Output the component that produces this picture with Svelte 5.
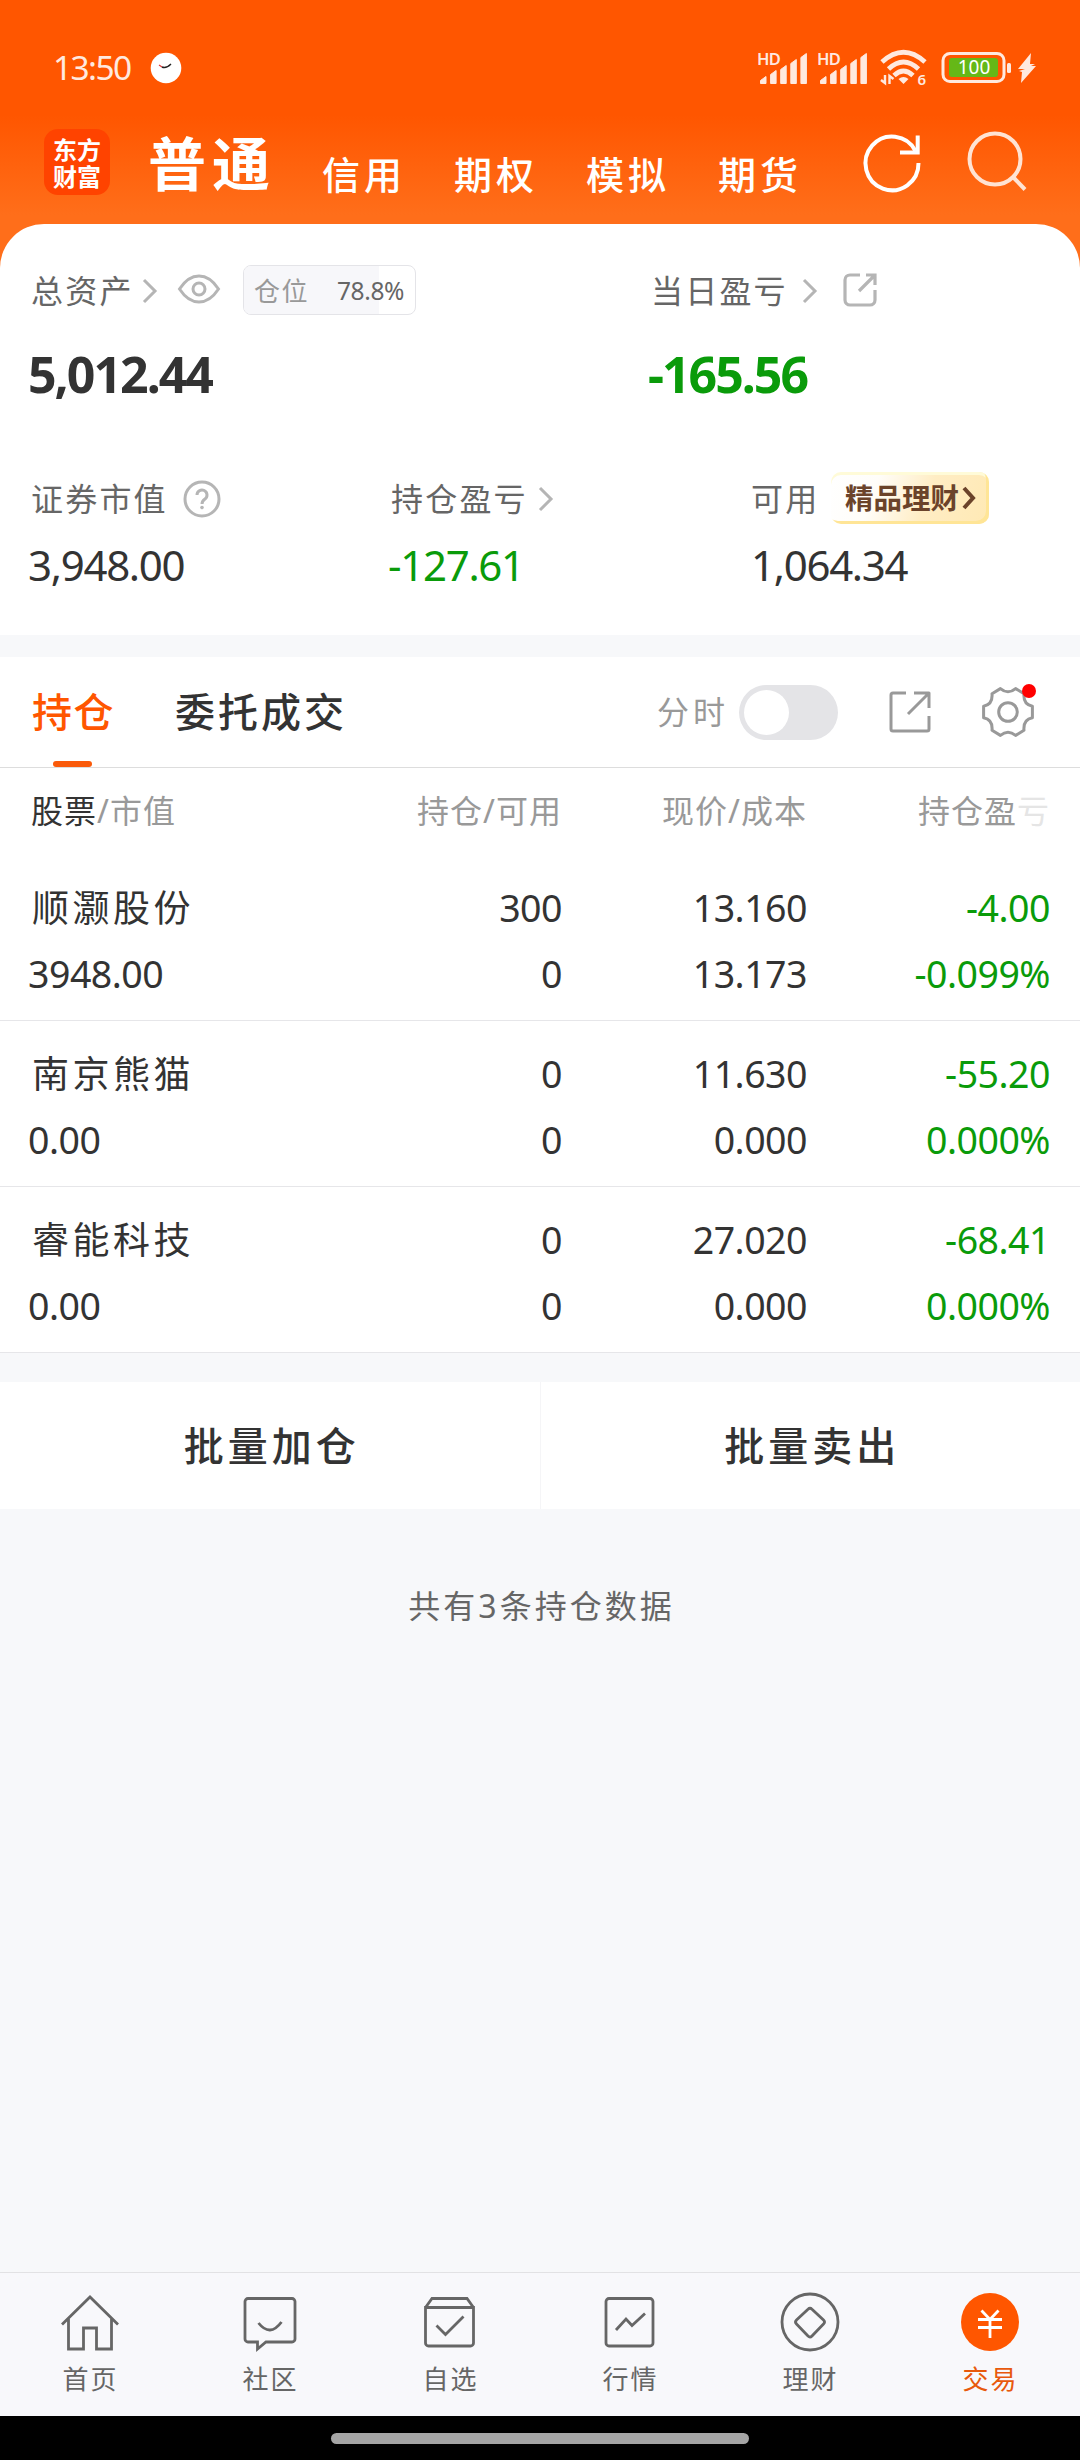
<script>
  const markets = ['信用', '期权', '模拟', '期货'];
  const bars = [7, 13, 18, 24, 30];

  let ratio = 78.8;
  let intraday = false;
  let activeTab = '交易';

  const holdings = [
    { name: '顺灏股份', value: '3948.00', amount: '300', usable: '0', price: '13.160', cost: '13.173', profit: '-4.00', rate: '-0.099%' },
    { name: '南京熊猫', value: '0.00', amount: '0', usable: '0', price: '11.630', cost: '0.000', profit: '-55.20', rate: '0.000%' },
    { name: '睿能科技', value: '0.00', amount: '0', usable: '0', price: '27.020', cost: '0.000', profit: '-68.41', rate: '0.000%' }
  ];

  const tabs = ['首页', '社区', '自选', '行情', '理财', '交易'];
</script>

<div class="app">
  <header>
    <div class="status">
      <span class="time">13:50</span>
      <svg class="clock" width="32" height="32" viewBox="0 0 32 32">
        <circle cx="16" cy="16" r="15.3" fill="#fff" />
        <path d="M9 13l3 2" stroke="#d33" stroke-width="1.2" fill="none" />
        <path d="M12 15q4 2 9-3" stroke="#222" stroke-width="1.4" fill="none" />
      </svg>
      <div class="right">
        {#each [1, 2] as sim}
          <div class="signal">
            <span>HD</span>
            <svg width="52" height="34" viewBox="0 0 52 34">
              {#each bars as h, i}
                <path d="M{2.5 + i * 10.1} 32.500v-{h - 4}l5.500-4v{h}z" fill="#ffe9df" stroke="#ffe9df" stroke-width="1" stroke-linejoin="round" />
              {/each}
            </svg>
          </div>
        {/each}
        <svg class="wifi" width="48" height="38" viewBox="0 0 48 38">
          <g fill="none" stroke="#ffe9df" stroke-width="4.800">
            <path d="M2 13q21.500-19.500 43 0" />
            <path d="M8.500 20q15-14 30 0" />
            <path d="M14 26.500q9.500-9 19 0" />
          </g>
          <path d="M18.500 30q5-4 10 0l-5 5z" fill="#ffe9df" />
          <path d="M1 31l4 3v-8M9.500 35v-8l4 3" fill="none" stroke="#ffe9df" stroke-width="2.400" />
          <text x="37.500" y="36" font-size="15" font-weight="600" fill="#ffe9df">6</text>
        </svg>
        <svg class="battery" width="97" height="34" viewBox="0 0 97 34">
          <rect x="2" y="2.500" width="61" height="28" rx="7" fill="none" stroke="#ffe9df" stroke-width="3" />
          <rect x="8" y="7" width="49" height="19" rx="3" fill="#65b817" />
          <rect x="66" y="12" width="4" height="10" rx="1.500" fill="#ffe9df" />
          <text x="33" y="23" text-anchor="middle" font-size="19" fill="#fff">100</text>
          <path d="M90 2L77 18h7l-6 2 3 1-1 11 15-17h-5l4-2h-5z" fill="#ffe9df" />
        </svg>
      </div>
    </div>

    <nav class="top">
      <div class="logo"><span>东方</span><span>财富</span></div>
      <h1>普通</h1>
      <div class="markets">
        {#each markets as market}
          <span>{market}</span>
        {/each}
      </div>
      <svg class="refresh" width="60" height="62" viewBox="0 0 60 62">
        <path d="M56.500 32A26.500 26.800 0 1 1 53.500 20" />
        <path d="M55.700 4.500v17H38" />
      </svg>
      <svg class="search" width="62" height="62" viewBox="0 0 62 62">
        <circle cx="28" cy="28" r="25.500" />
        <path d="M45 45l13 13.500" />
      </svg>
    </nav>
  </header>

  <section class="assets">
    <div class="row labels main">
      <div class="cell">
        <span class="total-label">总资产</span>
        <svg class="chevron" width="16" height="26" viewBox="0 0 16 26"><path d="M2 2l11 11L2 24" /></svg>
        <svg class="eye" width="42" height="30" viewBox="0 0 42 30">
          <path d="M1.500 15Q10 2 21 2t19.500 13Q32 28 21 28T1.500 15z" />
          <circle cx="21" cy="15" r="6" />
        </svg>
        <div class="position">
          <div class="fill" style="width: {ratio}%"></div>
          <span class="pos-label">仓位</span>
          <span class="pos-value">{ratio}%</span>
        </div>
      </div>
      <div class="cell">
        <span>当日盈亏</span>
        <svg class="chevron day" width="16" height="26" viewBox="0 0 16 26"><path d="M2 2l11 11L2 24" /></svg>
        <svg class="share" width="34" height="34" viewBox="0 0 34 34">
          <path d="M17 2H7a5 5 0 0 0-5 5v20a5 5 0 0 0 5 5h20a5 5 0 0 0 5-5V17" />
          <path d="M23 2h9v10M32 2L16 18" />
        </svg>
      </div>
    </div>
    <div class="row values main bold">
      <div class="cell">5,012.44</div>
      <div class="cell down">-165.56</div>
    </div>
    <div class="row labels sub">
      <div class="cell">
        <span>证券市值</span>
        <svg class="help" width="38" height="38" viewBox="0 0 38 38">
          <circle cx="19" cy="19" r="17" />
          <path d="M14 15a5 5 0 1 1 8 4q-3 2-3 5" />
          <circle class="dot" cx="19" cy="27.500" r="1.800" />
        </svg>
      </div>
      <div class="cell">
        <span>持仓盈亏</span>
        <svg class="chevron hold" width="16" height="26" viewBox="0 0 16 26"><path d="M2 2l11 11L2 24" /></svg>
      </div>
      <div class="cell usable">
        <span>可用</span>
        <div class="promo">
          <b>精品理财</b>
          <svg width="14" height="24" viewBox="0 0 14 24"><path d="M2 2l9 10-9 10" /></svg>
        </div>
      </div>
    </div>
    <div class="row values sub">
      <div class="cell">3,948.00</div>
      <div class="cell down">-127.61</div>
      <div class="cell">1,064.34</div>
    </div>
  </section>

  <section class="holdings">
    <div class="toolbar">
      <div class="tab active">持仓</div>
      <div class="tab">委托成交</div>
      <span class="intraday">分时</span>
      <div class="toggle" class:on={intraday}></div>
      <svg class="export" width="42" height="42" viewBox="0 0 42 42">
        <path d="M17 2H4a2 2 0 0 0-2 2v34a2 2 0 0 0 2 2h34a2 2 0 0 0 2-2V25" />
        <path d="M25 2h15v15M40 2L19 23" />
      </svg>
      <div class="settings">
        <svg width="52" height="52" viewBox="0 0 52 52">
          <path d="M10 7.700L18.400 2.600Q26 9 33.600 2.600L42 7.700Q41 18.500 50.400 20.300V31.700Q41 33.500 42 44.300L33.600 49.400Q26 43 18.400 49.400L10 44.300Q11 33.500 1.600 31.700V20.300Q11 18.500 10 7.700Z" />
          <circle cx="26" cy="26" r="9.300" />
        </svg>
        <i></i>
      </div>
    </div>

    <div class="line head">
      <div><em>股票</em>/市值</div>
      <div>持仓/可用</div>
      <div>现价/成本</div>
      <div>持仓盈<span class="fade">亏</span></div>
    </div>

    {#each holdings as item}
      <div class="stock">
        <div class="line">
          <div class="name">{item.name}</div>
          <div>{item.amount}</div>
          <div>{item.price}</div>
          <div class="down">{item.profit}</div>
        </div>
        <div class="line">
          <div>{item.value}</div>
          <div>{item.usable}</div>
          <div>{item.cost}</div>
          <div class="down">{item.rate}</div>
        </div>
      </div>
    {/each}
  </section>

  <section class="batch">
    <button>批量加仓</button>
    <button>批量卖出</button>
  </section>

  <p class="total">共有{holdings.length}条持仓数据</p>

  <footer>
    {#each tabs as tab}
      <div class="item" class:current={tab === activeTab}>
        <svg width="60" height="60" viewBox="0 0 60 60">
          {#if tab === '首页'}
            <path d="M2 31.500L30 4l28 27.500M8.500 26v30H23.500V35H36.500V56H51.500V26" />
          {:else if tab === '社区'}
            <path d="M8 5.500H52a3 3 0 0 1 3 3V46a3 3 0 0 1-3 3H26L17.500 56V49H8a3 3 0 0 1-3-3V8.500a3 3 0 0 1 3-3z" />
            <path d="M18.500 30q11.500 14.500 23-1" />
          {:else if tab === '自选'}
            <path d="M5.500 14.500h48V50a3 3 0 0 1-3 3h-42a3 3 0 0 1-3-3zM5.500 14.500L12 5.500H47l6.500 9" />
            <path d="M16.500 32.500l9 9L43.500 23.500" />
          {:else if tab === '行情'}
            <rect x="6" y="5.500" width="47" height="47.500" rx="3" />
            <path d="M16 37l10-11 6 6.500L45 20.500" />
          {:else if tab === '理财'}
            <circle cx="30" cy="29" r="28" />
            <path d="M28 16.200q2-2 4 0L43.500 27q2 2 0 4L32 43q-2 2-4 0L16.500 31q-2-2 0-4z" />
          {:else}
            <circle class="coin" cx="30" cy="29" r="29" />
            <path class="yen" d="M21.500 17.500L30 26.500l8.500-9M30 26.500V45M18 26.500H42M18 34.500H42" />
          {/if}
        </svg>
        <span>{tab}</span>
      </div>
    {/each}
  </footer>
  <div class="gesture"><i></i></div>
</div>

<style>
  :global(body) {
    margin: 0;
    background: #f7f8fa;
  }
  .app {
    width: 1080px;
    height: 2460px;
    display: flex;
    flex-direction: column;
    overflow: hidden;
    background: #f7f8fa;
    color: #333;
    font-family: "Noto Sans", "Noto Sans CJK SC", sans-serif;
  }
  svg {
    display: block;
    flex: none;
    overflow: visible;
  }

  /* header */
  header {
    height: 274px;
    margin-bottom: -50px;
    flex: none;
    background: linear-gradient(#ff5600 0, #ff5600 115px, #ff6e1a 215px);
    color: #fff;
  }
  .status {
    height: 136px;
    box-sizing: border-box;
    padding: 0 42px 0 53px;
    display: flex;
    align-items: center;
  }
  .time {
    width: 97px;
    margin-top: -2px;
    font-size: 33.5px;
    letter-spacing: -1.6px;
    color: #ffe9df;
  }
  .right {
    margin-left: auto;
    display: flex;
    align-items: center;
  }
  .signal {
    position: relative;
    width: 60px;
    height: 34px;
    display: flex;
    align-items: flex-end;
  }
  .signal span {
    position: absolute;
    left: -1px;
    top: -1px;
    font-size: 16.5px;
    line-height: 17px;
    font-weight: 600;
    letter-spacing: -0.8px;
    color: #ffe9df;
  }
  .wifi {
    margin-left: 2px;
  }
  .battery {
    margin-left: 13px;
  }
  .top {
    display: flex;
    height: 88px;
    padding-left: 44px;
    align-items: center;
  }
  .logo {
    width: 66px;
    height: 66px;
    padding-top: 6px;
    box-sizing: border-box;
    margin-top: -36px;
    border-radius: 14px;
    background: #ff4300;
    text-align: center;
    font-family: "Noto Sans CJK SC", sans-serif;
    font-size: 24px;
    font-weight: bold;
    line-height: 27px;
  }
  .logo span {
    display: block;
  }
  h1 {
    width: 132px;
    margin: -32px 0 0 38px;
    font-size: 58px;
    line-height: 70px;
    font-weight: 700;
    letter-spacing: 6px;
  }
  .markets {
    display: flex;
    gap: 48px;
    margin-top: -12px;
    margin-left: 42px;
    font-size: 38px;
    line-height: 50px;
    font-weight: 500;
  }
  .markets span {
    width: 84px;
    letter-spacing: 4px;
  }
  .refresh, .search {
    fill: none;
    stroke: #fff;
    stroke-width: 4;
    margin-top: -36px;
  }
  .refresh {
    margin-left: 60px;
  }
  .search {
    margin-left: 45px;
    stroke: #ffe3d3;
  }

  /* assets */
  .assets {
    height: 411px;
    flex: none;
    box-sizing: border-box;
    padding: 37px 0 0 28px;
    border-radius: 44px 44px 0 0;
    background: #fff;
  }
  .row {
    display: grid;
    height: 60px;
    align-items: center;
  }
  .main {
    grid-template-columns: 620px 1fr;
  }
  .sub {
    grid-template-columns: 360px 363px 1fr;
  }
  .cell {
    display: flex;
    align-items: center;
  }
  .labels {
    font-size: 32px;
    letter-spacing: 2.2px;
    color: #666;
  }
  .labels .cell {
    padding-left: 3px;
  }
  .labels .cell > span {
    width: 139px;
    margin-top: -4px;
  }
  .labels .cell > .total-label {
    width: 108px;
  }
  .labels .usable {
    padding-left: 0;
  }
  .labels .usable > span {
    width: 75px;
  }
  .values {
    margin-top: 5px;
    font-size: 42px;
    letter-spacing: -1.3px;
  }
  .values.bold {
    margin: 19px 0 69px;
    font-size: 50px;
    font-weight: bold;
    letter-spacing: -2px;
  }
  .down {
    color: #0a9b0a;
  }
  .chevron, .eye, .share, .help {
    fill: none;
    stroke: #b5b5b5;
    stroke-width: 3;
  }
  .chevron {
    margin-left: 3px;
  }
  .chevron.day {
    margin-left: 12px;
  }
  .chevron.hold {
    margin-left: 8px;
  }
  .eye {
    margin: -5px 0 0 20px;
  }
  .share {
    margin: -2px 0 0 25px;
    stroke-width: 3.2;
  }
  .help {
    margin-left: 13px;
  }
  .help .dot {
    fill: #b5b5b5;
    stroke: none;
  }
  .position {
    position: relative;
    width: 171px;
    height: 48px;
    margin: -2px 0 0 23px;
    display: flex;
    align-items: center;
    border: 1px solid #e4e4e8;
    border-radius: 8px;
    overflow: hidden;
    letter-spacing: 0;
  }
  .fill {
    position: absolute;
    left: 0;
    top: 0;
    height: 100%;
    background: #f7f7fa;
  }
  .pos-label {
    position: relative;
    width: 83px;
    padding-left: 10px;
    font-size: 26px;
    letter-spacing: 1.5px;
    color: #999;
  }
  .pos-value {
    position: relative;
    font-size: 24.5px;
    letter-spacing: -0.4px;
  }
  .promo {
    display: flex;
    align-items: center;
    width: 158px;
    height: 52px;
    box-sizing: border-box;
    margin: -2px 0 0 5px;
    padding-left: 14px;
    border-radius: 10px;
    background: linear-gradient(110deg, #fff 0, #fffdf9 28%, #ffedc4 60%, #ffe9b4);
    box-shadow: inset -3px -3px 0 #ffe596, inset 0 3px 0 #fffbd8;
    color: #6b432a;
    letter-spacing: 0;
  }
  .promo b {
    margin-top: -3px;
    font-size: 28.5px;
  }
  .promo svg {
    margin-left: 3px;
    fill: none;
    stroke: #6b432a;
    stroke-width: 4;
  }

  /* holdings */
  .holdings {
    margin-top: 22px;
    flex: none;
    background: #fff;
  }
  .toolbar {
    display: flex;
    align-items: center;
    height: 110px;
    padding-left: 32px;
    border-bottom: 1px solid #ddd;
  }
  .tab {
    position: relative;
    height: 110px;
    line-height: 110px;
    font-size: 40px;
    font-weight: 500;
    letter-spacing: 3px;
  }
  .tab + .tab {
    width: 180px;
    margin-left: 59px;
  }
  .tab.active {
    width: 84px;
    letter-spacing: 1.5px;
    color: #ff5600;
  }
  .tab.active::after {
    content: "";
    position: absolute;
    left: 21px;
    bottom: 0;
    width: 39px;
    height: 6px;
    border-radius: 3px;
    background: #fa5a0a;
  }
  .intraday {
    width: 82px;
    margin: -4px 0 0 302px;
    font-size: 32px;
    letter-spacing: 4px;
    color: #999;
  }
  .toggle {
    width: 99px;
    height: 55px;
    box-sizing: border-box;
    padding: 5px;
    border-radius: 28px;
    background: #e4e4e7;
  }
  .toggle::after {
    content: "";
    display: block;
    width: 45px;
    height: 45px;
    border-radius: 50%;
    background: #fff;
  }
  .toggle.on {
    background: #ff5600;
  }
  .export, .settings svg {
    fill: none;
    stroke: #999;
    stroke-width: 3;
    stroke-linejoin: round;
  }
  .export {
    margin-left: 51px;
  }
  .settings {
    position: relative;
    margin-left: 51px;
  }
  .settings i {
    position: absolute;
    right: -2px;
    top: -2px;
    width: 14px;
    height: 14px;
    border-radius: 50%;
    background: #f00;
  }
  .line {
    display: grid;
    grid-template-columns: 300px 234px 245px 243px;
    height: 66px;
    padding-left: 28px;
    align-items: center;
    text-align: right;
    font-size: 37.5px;
    letter-spacing: -0.5px;
  }
  .line > div:first-child {
    text-align: left;
  }
  .line > .name {
    margin-top: -3px;
    padding-left: 4px;
    font-size: 37px;
    letter-spacing: 3.5px;
  }
  .head {
    height: 87px;
    padding-bottom: 5px;
    box-sizing: border-box;
    font-size: 32px;
    letter-spacing: 1px;
    color: #999;
  }
  .head > div:first-child {
    padding-left: 3px;
  }
  .head em {
    font-style: normal;
    color: #333;
  }
  .head .fade {
    opacity: 0.25;
  }
  .stock {
    height: 166px;
    box-sizing: border-box;
    padding-top: 19px;
    border-bottom: 1px solid #e6e6e9;
  }

  /* batch buttons */
  .batch {
    display: flex;
    height: 127px;
    margin-top: 29px;
    flex: none;
    background: #fff;
  }
  button {
    flex: 1;
    padding: 0 0 4px 4px;
    border: none;
    background: none;
    color: #333;
    font-family: inherit;
    font-size: 40px;
    font-weight: 500;
    letter-spacing: 4px;
  }
  button + button {
    border-left: 1px solid #f5f5f7;
  }
  .total {
    flex: 1;
    margin: 0;
    padding: 72px 0 0 3px;
    text-align: center;
    font-size: 32px;
    line-height: 50px;
    letter-spacing: 3px;
    color: #666;
  }

  /* bottom navigation */
  footer {
    display: grid;
    grid-template-columns: repeat(6, 1fr);
    height: 143px;
    flex: none;
    border-top: 1px solid #e2e2e4;
    background: #f8f8fb;
  }
  .item {
    display: flex;
    flex-direction: column;
    align-items: center;
    padding-top: 20px;
    font-size: 26px;
    line-height: 36px;
    letter-spacing: 2px;
    color: #666;
  }
  .item span {
    margin-top: 8px;
    padding-left: 1px;
  }
  .item svg {
    fill: none;
    stroke: #666;
    stroke-width: 2.8;
  }
  .item .coin {
    fill: #ff5600;
    stroke: none;
  }
  .item .yen {
    stroke: #fff;
  }
  .current {
    color: #e8590c;
  }
  .gesture {
    display: flex;
    justify-content: center;
    height: 44px;
    flex: none;
    background: #000;
  }
  .gesture i {
    width: 418px;
    height: 11px;
    margin-top: 17px;
    border-radius: 6px;
    background: #a5a5a5;
  }
</style>
